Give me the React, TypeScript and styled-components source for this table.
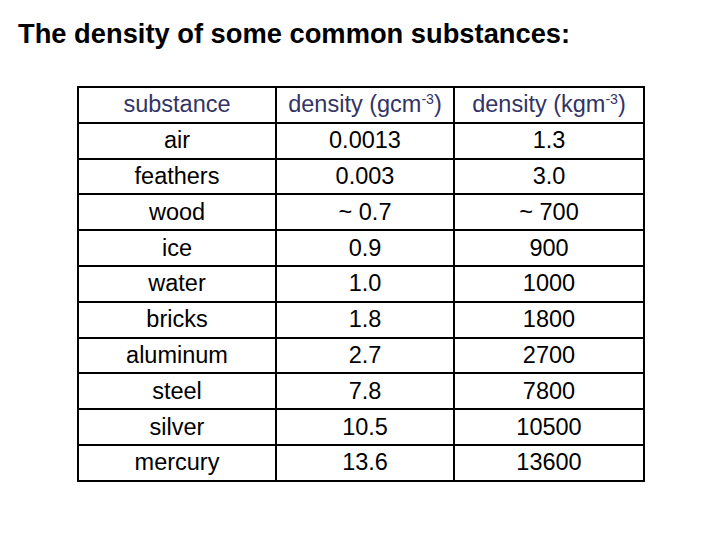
import { createGlobalStyle } from "styled-components";
import styled from "styled-components";

const GlobalStyle = createGlobalStyle`
  html, body {
    margin: 0;
    padding: 0;
    background: #ffffff;
  }
  body {
    font-family: "Liberation Sans", Arial, sans-serif;
  }
`;

const Page = styled.div`
  width: 720px;
  height: 540px;
  padding: 17px 0 0 18px;
  box-sizing: border-box;
`;

const Title = styled.h1`
  margin: 0 0 35px 0;
  font-size: 27.3px;
  line-height: 34px;
  font-weight: bold;
  color: #000000;
`;

const Table = styled.table`
  margin-left: 59px;
  border-collapse: collapse;
  border: 2px solid #000000;
`;

const baseCell = `
  height: 33.8px;
  padding: 0;
  border: 2px solid #000000;
  text-align: center;
  font-size: 23.5px;
  line-height: 33px;
`;

const Th = styled.th<{ $width: number }>`
  ${baseCell}
  width: ${(p) => p.$width}px;
  font-weight: normal;
  color: #333366;
`;

const Td = styled.td`
  ${baseCell}
  color: #000000;
`;

const Sup = styled.sup`
  font-size: 0.6em;
  line-height: 0;
  vertical-align: 0.6em;
`;

const rows = [
  ["air", "0.0013", "1.3"],
  ["feathers", "0.003", "3.0"],
  ["wood", "~ 0.7", "~ 700"],
  ["ice", "0.9", "900"],
  ["water", "1.0", "1000"],
  ["bricks", "1.8", "1800"],
  ["aluminum", "2.7", "2700"],
  ["steel", "7.8", "7800"],
  ["silver", "10.5", "10500"],
  ["mercury", "13.6", "13600"],
];

export default function App() {
  return (
    <>
      <GlobalStyle />
      <Page>
        <Title>The density of some common substances:</Title>
        <Table>
          <thead>
            <tr>
              <Th $width={196}>substance</Th>
              <Th $width={176}>
                density (gcm<Sup>-3</Sup>)
              </Th>
              <Th $width={188}>
                density (kgm<Sup>-3</Sup>)
              </Th>
            </tr>
          </thead>
          <tbody>
            {rows.map((r) => (
              <tr key={r[0]}>
                {r.map((c, i) => (
                  <Td key={i}>{c}</Td>
                ))}
              </tr>
            ))}
          </tbody>
        </Table>
      </Page>
    </>
  );
}
